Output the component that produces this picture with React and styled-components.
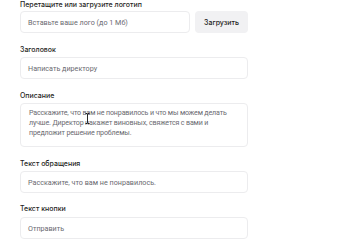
import React from 'react';
import styled, { createGlobalStyle } from 'styled-components';

const Global = createGlobalStyle`
  body {
    margin: 0;
    background: #ffffff;
    font-family: Inter, "Noto Sans", sans-serif;
  }
`

const Form = styled.div`
  width: 228px;
  padding: 0 0 0 20px;
  display: flex;
  flex-direction: column;
  gap: 11px;
`

const Field = styled.div`
  display: flex;
  flex-direction: column;
  gap: ${p => p.$gap || 3}px;
  position: relative;
`

const Label = styled.div`
  height: 10px;
  line-height: 10px;
  font-size: 7px;
  font-weight: 500;
  color: #1f1f24;
  transform: translateY(${p => p.$shift || 0}px);
`

const Row = styled.div`
  display: flex;
  gap: 5px;
`

const Input = styled.div`
  flex: ${p => p.$grow ? 1 : 'none'};
  height: 22px;
  box-sizing: border-box;
  border: 1px solid #ececee;
  border-radius: 4px;
  padding: 0 7px;
  display: flex;
  align-items: center;
  font-family: Roboto, "Noto Sans", sans-serif;
  font-size: 7.2px;
  color: #6a6a70;
  white-space: nowrap;
`

const Area = styled.div`
  height: 44px;
  box-sizing: border-box;
  border: 1px solid #ececee;
  border-radius: 4px;
  padding: 4px 5px 0 8px;
  font-family: Roboto, "Noto Sans", sans-serif;
  font-size: 7.1px;
  letter-spacing: -0.15px;
  line-height: 10px;
  color: #6a6a70;
  position: relative;
`

const Button = styled.div`
  width: 53px;
  height: 22px;
  border-radius: 4px;
  background: #f1f1f3;
  display: flex;
  align-items: center;
  justify-content: center;
  font-size: 7px;
  font-weight: 500;
  color: #1f1f24;
`

const Cursor = styled.svg`
  position: absolute;
  left: 64px;
  top: 9px;
`

export default function App() {
  return (
    <>
      <Global />
      <Form>
        <Field $gap={1}>
          <Label>Перетащите или загрузите логотип</Label>
          <Row>
            <Input $grow>Вставьте ваше лого (до 1 Мб)</Input>
            <Button>Загрузить</Button>
          </Row>
        </Field>
        <Field>
          <Label $shift={1}>Заголовок</Label>
          <Input>Написать директору</Input>
        </Field>
        <Field>
          <Label $shift={1}>Описание</Label>
          <Area>
            Расскажите, что вам не понравилось и что мы можем делать лучше. Директор накажет виновных, свяжется с вами и предложит решение проблемы.
            <Cursor width="5" height="11" viewBox="0 0 5 11">
              <path d="M0.5 0.5h1.5l0.5 0.6l0.5-0.6h1.5M2.5 1.1v8.8M0.5 10.5h1.5l0.5-0.6l0.5 0.6h1.5" fill="none" stroke="#111" strokeWidth="0.9" />
            </Cursor>
          </Area>
        </Field>
        <Field>
          <Label $shift={1}>Текст обращения</Label>
          <Input>Расскажите, что вам не понравилось.</Input>
        </Field>
        <Field>
          <Label>Текст кнопки</Label>
          <Input>Отправить</Input>
        </Field>
      </Form>
    </>
  )
}
